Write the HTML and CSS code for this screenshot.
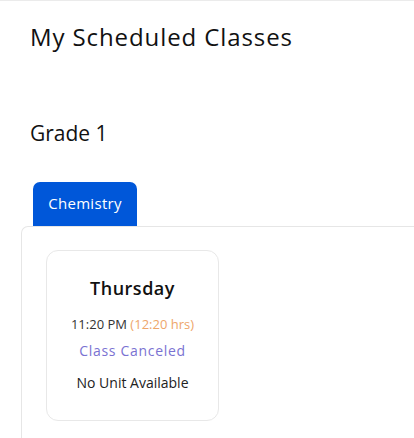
FILE: index.html
```html
<!DOCTYPE html>
<html lang="en">
<head>
    <meta charset="UTF-8">
    <meta name="viewport" content="width=device-width, initial-scale=1.0">
    <title>My Scheduled Classes</title>
    <link rel="stylesheet" href="styles.css">
</head>
<body>
    <div class="page">
        <h1 class="page-title">My Scheduled Classes</h1>

        <h2 class="grade-title">Grade 1</h2>

        <div class="tabs">
            <button class="tab active">Chemistry</button>
        </div>

        <div class="tab-panel">
            <div class="class-card">
                <div class="day">Thursday</div>
                <div class="time">11:20 PM <span class="duration">(12:20 hrs)</span></div>
                <div class="status">Class Canceled</div>
                <div class="unit">No Unit Available</div>
            </div>
        </div>
    </div>
</body>
</html>
```

FILE: styles.css
```css
body {
    margin: 0;
    font-family: "Open Sans", sans-serif;
    color: #111;
    background: #fff;
    overflow: hidden;
}
.page {
    border-top: 1px solid #ebebeb;
}
.page-title {
    margin: 0;
    padding: 19px 0 0 30px;
    font-size: 24px;
    font-weight: 400;
    letter-spacing: 0.9px;
    line-height: 34px;
}
.grade-title {
    margin: 0;
    padding: 64px 0 0 30px;
    font-size: 21px;
    font-weight: 400;
    line-height: 30px;
}
.tabs {
    display: flex;
    padding: 34px 0 0 33px;
}
.tab {
    width: 104px;
    height: 44px;
    border: none;
    border-radius: 7px 7px 0 0;
    background-color: #0057d9;
    color: #fff;
    font-family: inherit;
    font-size: 15px;
    letter-spacing: 0.3px;
    padding: 0 0 2px;
}
.tab-panel {
    margin-left: 21px;
    border: 1px solid #e6e6e6;
    border-right: none;
    border-radius: 7px 0 0 0;
    padding: 23px 0 20px 24px;
}
.class-card {
    width: 173px;
    height: 171px;
    box-sizing: border-box;
    border: 1px solid #e8e8e8;
    border-radius: 12px;
    text-align: center;
    padding-top: 25px;
}
.day {
    font-size: 18px;
    font-weight: 600;
    letter-spacing: 0.5px;
    line-height: 24px;
}
.time {
    margin-top: 14px;
    font-size: 13px;
    color: #333;
    line-height: 20px;
}
.duration {
    color: #eea66a;
}
.status {
    margin-top: 7px;
    font-size: 14px;
    letter-spacing: 0.7px;
    color: #7a72d2;
    line-height: 20px;
}
.unit {
    margin-top: 12px;
    font-size: 14px;
    color: #222;
    line-height: 20px;
}
```
